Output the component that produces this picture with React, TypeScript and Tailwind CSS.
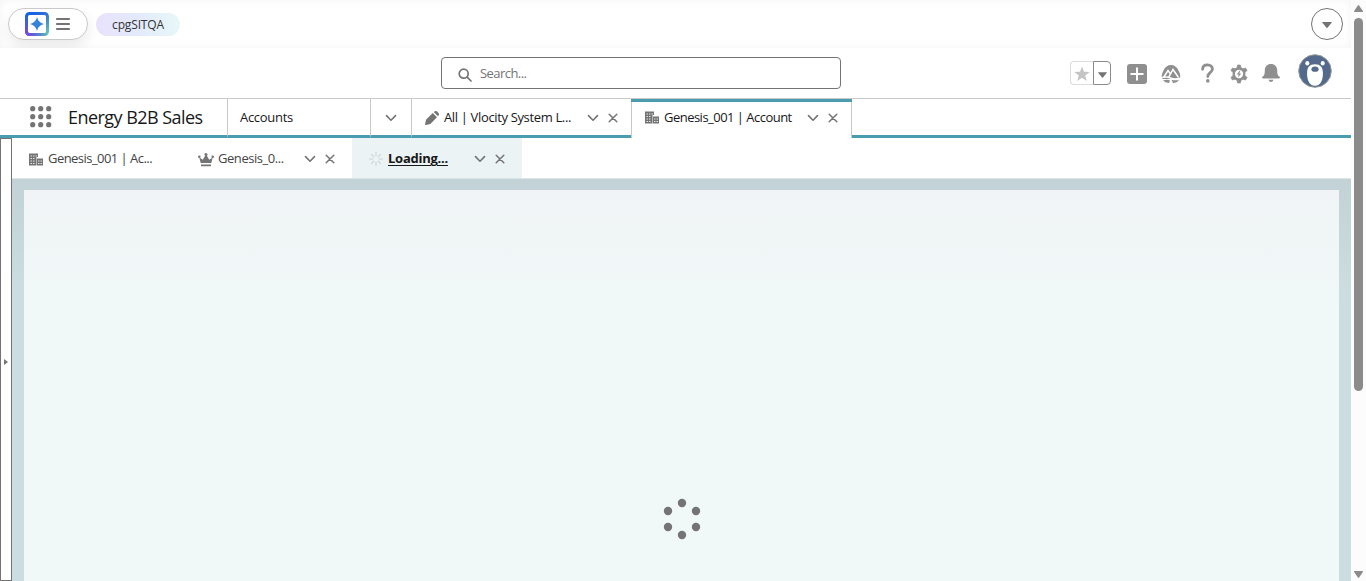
import type { ReactNode } from "react";

const Chevron = () => (
  <svg className="h-[8px] w-[12px] shrink-0" viewBox="0 0 12 8" fill="none" stroke="#747474" strokeWidth="1.6" strokeLinecap="round" strokeLinejoin="round">
    <path d="M1.5 1.6 6 6.2l4.500-4.600" />
  </svg>
);

const Close = () => (
  <svg className="h-[10px] w-[10px] shrink-0" viewBox="0 0 10 10" stroke="#747474" strokeWidth="1.5" strokeLinecap="round">
    <path d="M1.200 1.200 8.800 8.800M8.800 1.200 1.200 8.800" />
  </svg>
);

const Building = () => (
  <svg className="h-[14px] w-[14px] shrink-0" viewBox="0 0 14 14">
    <path d="M0 0.500h9v3.500H7.500v8.500H0z" fill="#747474" />
    <path d="M8 5.500h6v7H8z" fill="#747474" />
    <path d="M1.500 2.500h1.500v1H1.500zM4 2.500h1.500v1H4zM6.500 2.500h1.500v1H6.500zM1.500 5h1.500v1H1.500zM4 5h1.500v1H4zM1.500 7.500h1.500v1H1.500zM4 7.500h1.500v1H4zM1.500 10h1.500v1H1.500zM4 10h1.500v1H4zM9 7.500h1.500v1H9zM11.500 7.500h1.500v1h-1.500zM9 10h1.500v1H9zM11.500 10h1.500v1h-1.500z" fill="#e4e4e4" />
  </svg>
);

const Pencil = () => (
  <svg className="h-[14px] w-[14px] shrink-0" viewBox="0 0 14 14" fill="#747474">
    <path d="M7.700 2 12 6.300 5.300 13 .8 13.900a.5.5 0 0 1-.7-.7L1 8.700zM8.700 1 10 .2a1.500 1.500 0 0 1 1.800.1l1.900 1.900a1.500 1.500 0 0 1 .1 1.800L13 5.300z" />
  </svg>
);

const Crown = () => (
  <svg className="h-[14px] w-[16px] shrink-0" viewBox="0 0 16 14" fill="#747474">
    <path d="M2.700 10 1.300 4.500 4.800 6.700 7.300 2.500h1.400l2.500 4.200 3.500-2.200L13.300 10zM3 11.600h10v1.600H3z" />
    <circle cx="1.300" cy="3.700" r="1.300" />
    <circle cx="8" cy="1.500" r="1.500" />
    <circle cx="14.700" cy="3.700" r="1.300" />
  </svg>
);

const Down = ({ className }: { className: string }) => (
  <svg className={className} viewBox="0 0 10 6" fill="#747474">
    <path d="M.5 0h9q.7 0 .3.600L5.500 5.700q-.5.500-1 0L.2.600Q-.2 0 .5 0z" />
  </svg>
);

const Spokes = () => (
  <svg className="mt-[2px] h-[14px] w-[14px] shrink-0" viewBox="0 0 14 14" stroke="#d5dcde" strokeWidth="1.500" strokeLinecap="round">
    <path d="M7 .8v3M7 10.200v3M.8 7h3M10.200 7h3M2.600 2.600l2.100 2.100M9.300 9.300l2.100 2.100M2.600 11.400l2.100-2.100M9.300 4.700l2.100-2.100" />
  </svg>
);

const Label = ({ className, children }: { className: string; children: ReactNode }) => (
  <span className={`block shrink-0 whitespace-nowrap ${className}`}>{children}</span>
);

const TopBar = () => (
  <header className="flex h-12 items-center bg-white pl-2 pr-2 shadow-[inset_0_0_8px_rgba(0,0,0,0.05)]">
    <div className="flex h-8 w-20 items-center rounded-full border border-[#c9c9c9] bg-white pl-4 shadow-[0_6px_14px_rgba(0,0,0,0.09)]">
      <svg className="h-6 w-6" viewBox="0 0 24 24">
        <defs>
          <linearGradient id="logo" x1="0" y1="0" x2="1" y2="1">
            <stop offset="0" stopColor="#0b62e8" />
            <stop offset=".5" stopColor="#2e70d9" />
            <stop offset="1" stopColor="#66cbb5" />
          </linearGradient>
          <linearGradient id="corner" x1="0" y1="1" x2=".55" y2=".45">
            <stop offset="0" stopColor="#8442dc" />
            <stop offset="1" stopColor="#4a64df" stopOpacity="0" />
          </linearGradient>
        </defs>
        <rect x="1.500" y="1.500" width="21" height="21" rx="3" fill="white" stroke="url(#logo)" strokeWidth="3" />
        <rect x="1.500" y="1.500" width="21" height="21" rx="3" fill="none" stroke="url(#corner)" strokeWidth="3" />
        <path d="M12 5c1.300 4.100 2.900 5.700 7 7-4.100 1.300-5.700 2.900-7 7-1.300-4.100-2.900-5.700-7-7 4.100-1.300 5.700-2.900 7-7z" fill="#3484dc" />
      </svg>
      <svg className="ml-[7px] h-[12px] w-[14px]" viewBox="0 0 14 12" stroke="#747474" strokeWidth="1.800" strokeLinecap="round">
        <path d="M.8 1h12.400M.8 6h12.400M.8 11h12.400" />
      </svg>
    </div>
    <div className="ml-2 flex h-[23px] w-[84px] items-center justify-center rounded-full bg-linear-to-r from-[#e8e2fc] via-[#e3eafc] to-[#e8f7f7] pt-[2px]">
      <Label className="text-[12px] tracking-[-0.15px] text-[#333]">cpgSITQA</Label>
    </div>
    <div className="ml-auto flex h-8 w-8 items-center justify-center rounded-full border border-[#747474] bg-white">
      <Down className="mt-px h-[6px] w-[10px]" />
    </div>
  </header>
);

const GlobalHeader = () => (
  <div className="flex h-[50px] items-center bg-white pl-[441px] pr-[19px]">
    <div className="flex h-8 w-[400px] items-center rounded-[4px] border border-[#747474] pl-4">
      <svg className="mt-[3px] h-[14px] w-[14px]" viewBox="0 0 14 14" fill="none" stroke="#747474" strokeWidth="1.700" strokeLinecap="round">
        <circle cx="5.700" cy="5.700" r="4.500" />
        <path d="m9.200 9.200 3.800 3.800" />
      </svg>
      <Label className="ml-2 pt-[2px] text-[13px] tracking-[-0.55px] text-[#747474]">Search...</Label>
    </div>
    <div className="ml-auto flex items-center">
      <div className="flex h-6 w-[41px]">
        <div className="flex w-[23px] items-center justify-center rounded-l-[4px] border border-r-0 border-[#dcdcdc]">
          <svg className="mt-px h-4 w-4" viewBox="0 0 16 16" fill="#c4c4c4">
            <path d="m8 .5 2 5.300 5.700.200-4.500 3.500 1.600 5.500L8 11.800 3.200 15l1.600-5.500L.3 6l5.700-.200z" />
          </svg>
        </div>
        <div className="flex w-[18px] items-center justify-center rounded-r-[4px] border border-[#8a8a8a]">
          <Down className="mt-[3px] h-[6px] w-[9px]" />
        </div>
      </div>
      <svg className="mt-[2px] ml-4 h-5 w-5" viewBox="0 0 20 20">
        <rect width="20" height="20" rx="3" fill="#8f8f8f" />
        <path d="M10 4.200v11.600M4.200 10h11.600" stroke="#fff" strokeWidth="2" strokeLinecap="round" />
      </svg>
      <svg className="mt-[2px] ml-[14px] h-5 w-5" viewBox="0 0 20 20">
        <path d="M10 1q5 0 7.500 5.500Q20 11 19 15H1q-1-4 1.500-8.500Q5 1 10 1z" fill="#8f8f8f" />
        <path d="M2.500 13.500 7 6.500l3 4M7.500 13.500 12 5.500l5.500 8" fill="none" stroke="#fff" strokeWidth="1.500" />
        <path d="M0 14q5-2 9.500 0t10.500 0" fill="none" stroke="#fff" strokeWidth="1.400" />
        <path d="M2 16.500q4-1.500 7 0l-1 2.400q-4 0-6-2.400zM10.500 15.800q4 1 7.500.2-2 3-6 3z" fill="#8f8f8f" />
      </svg>
      <svg className="ml-[20px] h-5 w-[13px]" viewBox="0 0 13 20" fill="none">
        <path d="M1.600 6.300C1.600 3.300 3.500 1.800 6.500 1.800s4.900 1.800 4.900 4.300c0 3.600-4.600 3.600-4.600 7.400" stroke="#8f8f8f" strokeWidth="2.800" strokeLinecap="round" />
        <circle cx="6.800" cy="17.900" r="1.800" fill="#8f8f8f" />
      </svg>
      <svg className="mt-[2px] ml-[16px] h-5 w-[18px]" viewBox="0 0 18 20">
        <path d="M7.600 1h2.800l.6 2.700 2 1.100 2.600-.8L17 6.500 15 8.600v2.800l2 2.100-1.400 2.500-2.600-.8-2 1.100-.6 2.700H7.600L7 16.300l-2-1.100-2.600.8L1 13.500l2-2.100V8.600L1 6.500 2.400 4l2.600.8 2-1.100z" fill="#8f8f8f" stroke="#8f8f8f" strokeWidth=".7" strokeLinejoin="round" />
        <circle cx="9" cy="10" r="4.200" fill="#fff" />
        <path d="M9.800 6.400 6.800 10.600h1.900l-.6 3 3.100-4.200H9.200l1.300-3z" fill="#8f8f8f" />
      </svg>
      <svg className="mb-px ml-[14px] h-[18px] w-[18px]" viewBox="0 0 18 18" fill="#8f8f8f">
        <path d="M9 0C5.300 0 2.800 2.700 2.800 6.200c0 4-.6 5.300-2.200 6.300-1 .6-.7 1.900.4 1.900h16c1.100 0 1.400-1.300.4-1.900-1.600-1-2.200-2.300-2.200-6.300C15.200 2.700 12.700 0 9 0zM6.500 15.700h5Q10.800 18 9 18t-2.500-2.300z" />
      </svg>
      <svg className="mb-[4px] ml-[18px] h-[34px] w-[34px]" viewBox="0 0 34 34">
        <defs><clipPath id="face"><circle cx="17" cy="17" r="16" /></clipPath></defs>
        <circle cx="17" cy="17" r="16.300" fill="#536a8d" stroke="#989898" strokeWidth="1" />
        <g clipPath="url(#face)">
          <path d="M17 10.300c-5.500 0-7.700 3-7.900 8-.3 7.500 2 13.500 7.900 13.500s8.200-6 7.900-13.500c-.2-5-2.400-8-7.900-8z" fill="#fff" />
          <ellipse cx="9.300" cy="9.300" rx="2" ry="2.300" fill="#fff" />
          <ellipse cx="24.700" cy="9.300" rx="2" ry="2.300" fill="#fff" />
          <ellipse cx="17" cy="15.200" rx="3.600" ry="2.600" fill="#536a8d" />
        </g>
      </svg>
    </div>
  </div>
);

const NavBar = () => (
  <nav className="grid h-10 grid-cols-[227px_143px_41px_220px_221px_1fr] bg-white text-[13px] text-[#181818]">
    <div className="flex items-center border-t border-b-3 border-t-[#c9c9c9] border-b-[#4a9dae] pl-[30px]">
      <svg className="h-[22px] w-[22px]" viewBox="0 0 22 22" fill="#747474">
        {[2.7, 10.7, 18.7].map((y) => [2.7, 10.7, 18.7].map((x) => <circle key={`${x}-${y}`} cx={x} cy={y} r="2.600" />))}
      </svg>
      <Label className="ml-4 pt-px text-[18px] tracking-[-0.54px]">Energy B2B Sales</Label>
    </div>
    <div className="flex items-center border-t border-b-3 border-l border-t-[#c9c9c9] border-b-[#4a9dae] border-l-[#c9c9c9] pt-[2px] pl-3">
      <Label className="tracking-[-0.3px]">Accounts</Label>
    </div>
    <div className="flex items-center justify-center border-t border-b-3 border-l border-t-[#c9c9c9] border-b-[#4a9dae] border-l-[#c9c9c9] pt-[2px]">
      <Chevron />
    </div>
    <div className="flex items-center border-t border-b-3 border-l border-t-[#c9c9c9] border-b-[#4a9dae] border-l-[#c9c9c9] pt-[2px] pl-[13px]">
      <Pencil />
      <Label className="ml-[5px] w-[143px] tracking-[-0.35px]">All | Vlocity System L...</Label>
      <Chevron />
      <span className="ml-[9px]"><Close /></span>
    </div>
    <div className="flex flex-col border-t border-t-[#c9c9c9]">
      <div className="h-[3px] shrink-0 bg-[#4a9dae]" />
      <div className="flex flex-1 items-center border-x border-[#c9c9c9] pb-[4px] pl-[13px]">
        <Building />
        <Label className="ml-[5px] w-[143px] tracking-[-0.52px]">Genesis_001 | Account</Label>
        <Chevron />
        <span className="ml-[9px]"><Close /></span>
      </div>
    </div>
    <div className="border-t border-b-3 border-t-[#c9c9c9] border-b-[#4a9dae]" />
  </nav>
);

const SubTabs = () => (
  <div className="grid h-[41px] shrink-0 grid-cols-[170px_170px_170px_1fr] border-b border-[#dde5e7] bg-white text-[13px] text-[#444]">
    <div className="flex items-center pl-[17px]">
      <span className="pt-[3px]"><Building /></span>
      <Label className="ml-[5px] pt-[2px] tracking-[-0.54px]">Genesis_001 | Ac...</Label>
    </div>
    <div className="flex items-center pl-4">
      <span className="pt-[3px]"><Crown /></span>
      <Label className="ml-[4px] w-[86px] pt-[2px] tracking-[-0.44px]">Genesis_0...</Label>
      <span className="pt-[2px]"><Chevron /></span>
      <span className="ml-[9px] pt-[2px]"><Close /></span>
    </div>
    <div className="flex items-center bg-[#ebf3f5] pl-[17px]">
      <Spokes />
      <Label className="ml-[5px] w-[86px] pt-[2px] font-bold tracking-[-0.25px] text-[#181818]">
        <span className="underline decoration-1 underline-offset-2">Loading...</span>
      </Label>
      <span className="pt-[2px]"><Chevron /></span>
      <span className="ml-[9px] pt-[2px]"><Close /></span>
    </div>
  </div>
);

const Scrollbar = () => (
  <div className="flex w-[15px] flex-col items-center bg-[#fcfcfc]">
    <svg className="mt-[5px] h-[8px] w-[9px] shrink-0" viewBox="0 0 9 8" fill="#8b8b8b"><path d="M3.900.4Q4.500-.3 5.100.4L8.700 5.800Q9.500 7 8.500 7h-8Q-.5 7 .3 5.800z" /></svg>
    <div className="mt-[5px] h-[373px] w-[9px] shrink-0 rounded-full bg-[#8b8b8b]" />
    <svg className="mt-auto mb-[3px] h-[8px] w-[9px] shrink-0" viewBox="0 0 9 8" fill="#8b8b8b"><path d="M3.900 7.600q.6.700 1.200 0L8.700 2.200Q9.500 1 8.500 1h-8Q-.5 1 .3 2.200z" /></svg>
  </div>
);

export default function App() {
  return (
    <div className="flex h-[581px] w-[1366px] overflow-hidden bg-white font-['Open_Sans','Noto_Sans',sans-serif]">
      <div className="flex min-w-0 flex-1 flex-col">
        <TopBar />
        <GlobalHeader />
        <NavBar />
        <main className="flex min-h-0 flex-1">
          <aside className="flex w-3 shrink-0 flex-col border border-[#747474] bg-white">
            <svg className="mt-[220px] ml-[3px] h-[6px] w-[4px]" viewBox="0 0 4 6" fill="#747474"><path d="M0 0 4 3 0 6z" /></svg>
          </aside>
          <div className="flex min-w-0 flex-1 flex-col">
            <SubTabs />
            <div className="flex flex-1 bg-linear-to-b from-[#c2d2d6] to-[#cbdde0] to-[110px] px-3 pt-[11px]">
              <section className="flex flex-1 justify-center bg-linear-to-b from-[#f0f4f6] to-[#f1f8f8] to-[110px]">
                <svg className="mt-[308px] h-[42px] w-[38px]" viewBox="0 0 38 42" fill="#747474">
                  {[[19, 5], [33, 13], [33, 29], [19, 37], [5, 29], [5, 13]].map(([x, y]) => (
                    <circle key={`${x}-${y}`} cx={x} cy={y} r="4.200" />
                  ))}
                </svg>
              </section>
            </div>
          </div>
        </main>
      </div>
      <Scrollbar />
    </div>
  );
}
